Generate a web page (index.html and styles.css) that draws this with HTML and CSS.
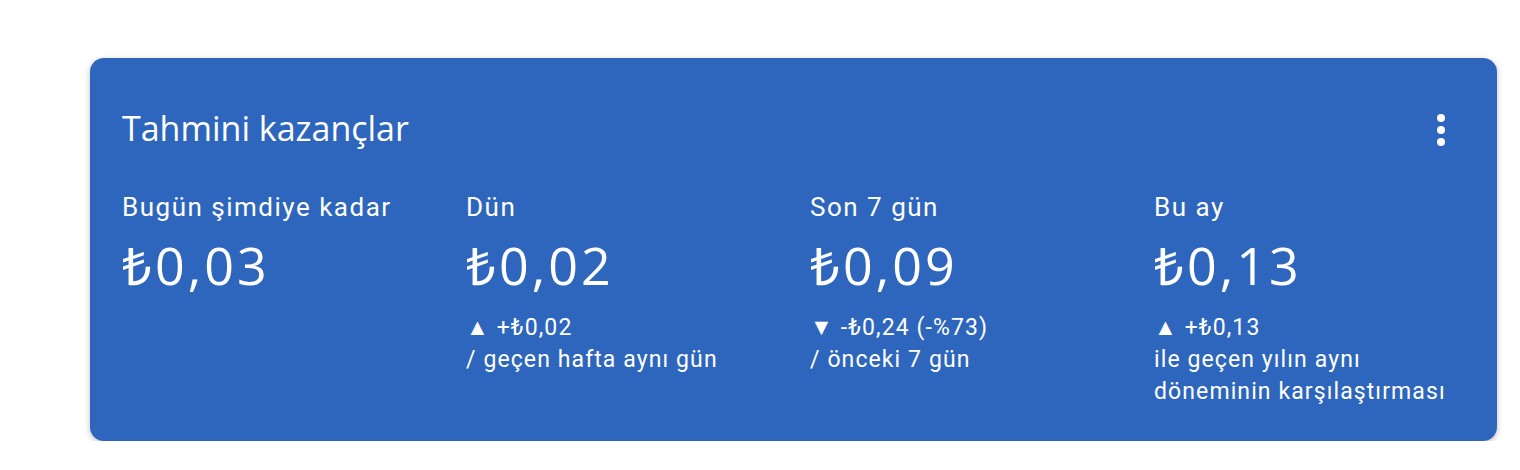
FILE: index.html
```html
<!DOCTYPE html>
<html>
<head>
  <title>Tahmini kazançlar</title>
  <link rel="stylesheet" href="styles.css">
</head>
<body>
  <div class="page">
    <div class="kart">
      <div class="kart-baslik">
        <h2>Tahmini kazançlar</h2>
        <button class="menu" aria-label="Diğer seçenekler">
          <span></span><span></span><span></span>
        </button>
      </div>
      <div class="ozet">
        <div class="kolon">
          <div class="etiket">Bugün şimdiye kadar</div>
          <div class="tutar">₺0,03</div>
        </div>
        <div class="kolon">
          <div class="etiket">Dün</div>
          <div class="tutar">₺0,02</div>
          <div class="fark">▲ +₺0,02</div>
          <div class="aciklama">/ geçen hafta aynı gün</div>
        </div>
        <div class="kolon">
          <div class="etiket">Son 7 gün</div>
          <div class="tutar">₺0,09</div>
          <div class="fark">▼ -₺0,24 (-%73)</div>
          <div class="aciklama">/ önceki 7 gün</div>
        </div>
        <div class="kolon">
          <div class="etiket">Bu ay</div>
          <div class="tutar">₺0,13</div>
          <div class="fark">▲ +₺0,13</div>
          <div class="aciklama">ile geçen yılın aynı<br>döneminin karşılaştırması</div>
        </div>
      </div>
    </div>
  </div>
</body>
</html>
```

FILE: styles.css
```css
body {
  margin: 0;
  padding: 0;
  background: #fff;
  font-family: Roboto, Arial, sans-serif;
}

.page {
  padding: 58px 23px 0 90px;
}

.kart {
  background-color: #2e66bd;
  color: #fff;
  border-radius: 14px;
  box-shadow: 0 2px 6px rgba(0, 0, 0, 0.25);
  padding: 40px 32px 28px 32px;
  height: 383px;
  box-sizing: border-box;
}

.kart-baslik {
  display: flex;
  justify-content: space-between;
  align-items: center;
}

.kart-baslik h2 {
  margin: 0;
  font-family: "Open Sans", sans-serif;
  font-weight: 400;
  font-size: 34px;
  line-height: 60px;
}

.menu {
  background: none;
  border: 0;
  padding: 0;
  width: 40px;
  height: 40px;
  display: flex;
  flex-direction: column;
  align-items: center;
  justify-content: center;
  gap: 4px;
  margin-top: 4px;
  margin-right: 4px;
}

.menu span {
  width: 8px;
  height: 8px;
  border-radius: 50%;
  background: #fff;
}

.ozet {
  display: grid;
  grid-template-columns: 344px 344px 344px 1fr;
  margin-top: 33px;
}

.etiket {
  font-size: 26px;
  line-height: 32px;
  letter-spacing: 1.5px;
}

.tutar {
  font-family: "Open Sans", sans-serif;
  font-size: 52px;
  line-height: 64px;
  letter-spacing: 3px;
  margin-top: 10px;
  margin-bottom: 15px;
}

.fark, .aciklama {
  font-size: 23px;
  line-height: 32px;
  letter-spacing: 1.1px;
}
```
